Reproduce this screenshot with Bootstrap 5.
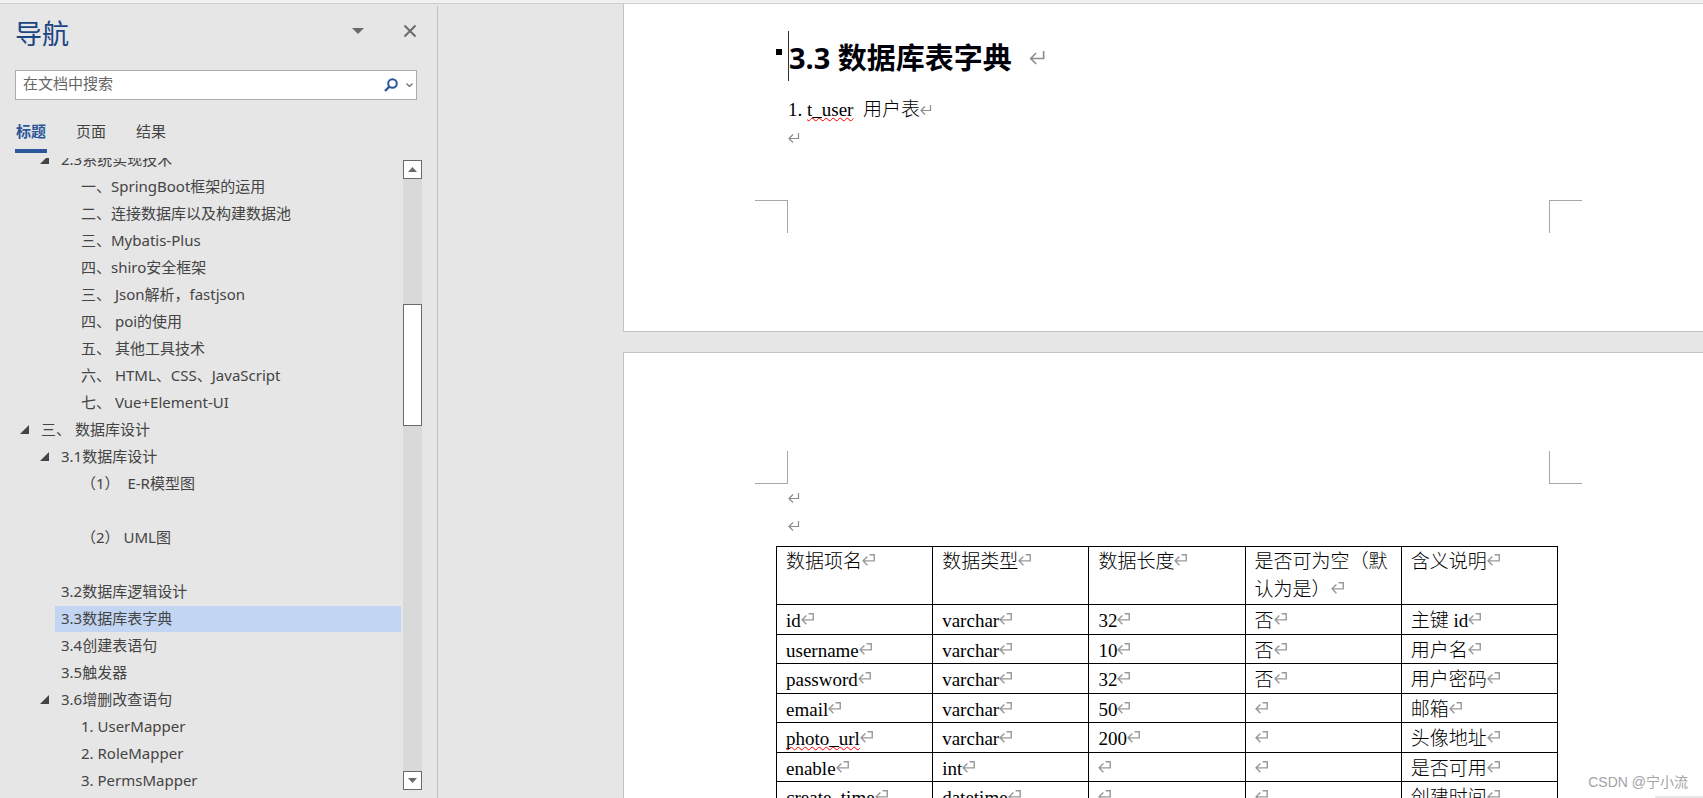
<!DOCTYPE html>
<html lang="zh-CN">
<head>
<meta charset="utf-8">
<meta name="viewport" content="width=device-width, initial-scale=1">
<title>3.3 数据库表字典</title>
<link href="https://cdn.jsdelivr.net/npm/bootstrap@5.3.0/dist/css/bootstrap.min.css" rel="stylesheet">
<style>
  body { background: #e6e6e6; color: #444; font: 15px/27px "Noto Sans", "Noto Sans CJK SC", sans-serif; }
  button { background: none; border: 0; padding: 0; color: inherit; }
  svg { display: block; }
  .ribbon-edge { height: 4px; background: #f1f1f1; border-bottom: 1px solid #cfcfcf; }

  /* navigation pane */
  .nav-pane { width: 438px; margin-top: 2px; border-right: 1px solid #c0c0c0; }
  .pane-head { height: 54px; padding: 0 20px 0 15px; }
  .pane-title { font-size: 27px; line-height: 54px; padding-top: 2px; font-weight: 400; color: #1a4585; }
  .pane-tools { gap: 39px; color: #6a6a6a; padding-bottom: 4px; }
  .search-box { height: 30px; margin: 10px 20px 0 15px; background: #fff; border: 1px solid #ababab; }
  .search-box input { font-size: 15px; line-height: 24px; color: #444; padding: 0 7px 4px; border: 0; border-radius: 0; background: none; }
  .search-box input::placeholder { color: #666; opacity: 1; }
  .search-box svg { margin-right: 8px; }
  .search-box button:last-child svg { margin-right: 3px; }
  .pane-tabs { margin: 16px 15px 0; gap: 28px; }
  .pane-tabs button { height: 37px; padding: 0 1px 2px; line-height: 27px; border-bottom: 4px solid transparent; }
  .pane-tabs .active { color: #2b579a; font-weight: 700; border-color: #2b579a; }
  .outline-area { margin: 5px 15px 0 0; }
  .outline { margin-top: -11px; }
  .outline li { height: 27px; padding-left: 75px; }
  .outline .lv1 { padding-left: 20px; }
  .outline .lv2 { padding-left: 55px; }
  .outline .lv2.open { padding-left: 40px; }
  .outline li > button { width: 9px; margin: 8px 6px 0 0; height: 9px; }
  .outline a { color: #444; padding-left: 6px; height: 26px; line-height: 24px; text-decoration: none; white-space: pre; }
  .outline .current a { background: #c2d5f2; }
  .scroll-col { width: 19px; margin: 2px 0 8px 2px; background: #d9d9d9; color: #6a6a6a; }
  .scroll-col button, .scroll-thumb { border: 1px solid #6a6a6a; background: #fff; }
  .scroll-col button { height: 19px; }
  .scroll-gap { flex: 125 1 0; }
  .scroll-thumb { flex: 121 1 0; }
  .scroll-rest { flex: 346 1 0; }

  /* document */
  .doc-area { padding-left: 185px; gap: 20px; }
  .sheet { background: #fff; border: 1px solid #c3c3c3; border-width: 0 0 0 1px; padding: 27px 154px 98px 164px; color: #000; font: 19px/28px "Liberation Serif", "Noto Sans CJK SC", serif; }
  .sheet-one { border-bottom-width: 1px; }
  .sheet-two { border-top-width: 1px; padding-top: 98px; padding-bottom: 0; }
  .sheet p { height: 28px; margin: 0; }
  .doc-heading { height: 50px; border-left: 1px solid #333; font: 700 29px/50px "Noto Sans", "Noto Sans CJK SC", sans-serif; margin-bottom: 15px; padding-top: 4px; color: #000008; }
  .doc-heading::before { content: ""; position: absolute; width: 6px; height: 6px; left: -13px; top: 18px; background: #000; }
  .doc-heading svg { margin-left: 17px; }
  .cjk, .dict td.cjk { font-weight: 300; }
  .misspelt { text-decoration: underline wavy #f00 1px; text-underline-offset: 1px; text-decoration-skip-ink: none; }
  .crops { margin: 0 -33px; }
  .crops span { width: 33px; height: 33px; border: 0 solid #a8a8a8; }
  .crop-tl { border-width: 1px 1px 0 0 !important; }
  .crop-tr { border-width: 1px 0 0 1px !important; }
  .crop-bl { border-width: 0 1px 1px 0 !important; }
  .crop-br { border-width: 0 0 1px 1px !important; }
  .mark-p { width: 12px; height: 11px; display: inline-block; color: #8c8c8c; vertical-align: 0; }
  .sheet-one .crops { margin-top: 48px; }
  .dict { width: calc(100% + 21px); margin: 6px -9px 0 -12px; table-layout: fixed; border-collapse: collapse; line-height: 24px; }
  .dict th, .dict td { border: 1px solid #000; padding: 4px 0 0 9px; vertical-align: top; font-weight: 400; white-space: nowrap; height: 29px; }
  .dict tbody tr:nth-child(odd) td { height: 30px; }
  .dict th { white-space: normal; font-weight: 300; padding-top: 1px; line-height: 28px; }
  .dict .mark-p { width: 13px; height: 12px; vertical-align: 2px; color: #999; }
  .watermark { right: 15px; bottom: 4px; font: 14px/24px "Liberation Sans", "Noto Sans CJK SC", sans-serif; color: #a3a3a3; }
  .corner-tab { right: 0; bottom: 0; width: 48px; height: 2px; background: #e6e6e6; }
</style>
</head>
<body>
<svg width="0" height="0" class="position-absolute" aria-hidden="true">
  <symbol id="ret" viewBox="0 0 12 11"><path d="M10.500 0V5.500H1M5 1.500L1 5.500L5 9.500" fill="none" stroke="currentColor" stroke-width="1.200"/></symbol>
  <symbol id="cel" viewBox="0 0 12 11"><path d="M7 .7H11.300V6.300H1M5 2.300L1 6.300L5 10.300" fill="none" stroke="currentColor" stroke-width="1.300"/></symbol>
  <symbol id="tri" viewBox="0 0 9 9"><path d="M9 0V9H0Z" fill="#444"/></symbol>
</svg>
<div class="vh-100 d-flex flex-column overflow-hidden position-relative">
  <div class="ribbon-edge flex-shrink-0"></div>
  <div class="d-flex flex-grow-1 overflow-hidden">
    <aside class="nav-pane d-flex flex-column flex-shrink-0">
      <div class="pane-head d-flex justify-content-between align-items-center flex-shrink-0">
        <h1 class="pane-title m-0">导航</h1>
        <div class="pane-tools d-flex align-items-center">
          <button type="button" aria-label="选项"><svg width="12" height="6"><path d="M0 0H12L6 6Z" fill="currentColor"/></svg></button>
          <button type="button" aria-label="关闭"><svg width="14" height="14"><path d="M1.500 1.500L12.500 12.500M12.500 1.500L1.500 12.500" stroke="currentColor" stroke-width="2"/></svg></button>
        </div>
      </div>
      <form class="search-box d-flex align-items-center flex-shrink-0">
        <input class="form-control shadow-none h-100" type="text" placeholder="在文档中搜索" aria-label="在文档中搜索">
        <button type="button" aria-label="搜索"><svg width="14" height="14"><circle cx="8.500" cy="5.500" r="4.300" fill="none" stroke="#2b579a" stroke-width="2"/><path d="M5.500 8.500L1 13" stroke="#2b579a" stroke-width="2.400"/></svg></button>
        <button type="button" aria-label="搜索选项"><svg width="7" height="5"><path d="M.5 .5L3.500 3.500L6.500 .5" fill="none" stroke="#666" stroke-width="1.200"/></svg></button>
      </form>
      <div class="pane-tabs d-flex flex-shrink-0" role="tablist">
        <button type="button" role="tab" class="active" aria-selected="true">标题</button>
        <button type="button" role="tab" aria-selected="false">页面</button>
        <button type="button" role="tab" aria-selected="false">结果</button>
      </div>
      <div class="outline-area d-flex flex-grow-1 overflow-hidden">
        <nav class="flex-grow-1 overflow-hidden">
          <ul class="outline list-unstyled mb-0">
            <li class="lv2 open d-flex"><button type="button" aria-label="折叠"><svg width="9" height="9"><use href="#tri"/></svg></button><a class="flex-grow-1" href="#">2.3系统实现技术</a></li>
            <li class="d-flex"><a class="flex-grow-1" href="#">一、SpringBoot框架的运用</a></li>
            <li class="d-flex"><a class="flex-grow-1" href="#">二、连接数据库以及构建数据池</a></li>
            <li class="d-flex"><a class="flex-grow-1" href="#">三、Mybatis-Plus</a></li>
            <li class="d-flex"><a class="flex-grow-1" href="#">四、shiro安全框架</a></li>
            <li class="d-flex"><a class="flex-grow-1" href="#">三、 Json解析，fastjson</a></li>
            <li class="d-flex"><a class="flex-grow-1" href="#">四、 poi的使用</a></li>
            <li class="d-flex"><a class="flex-grow-1" href="#">五、 其他工具技术</a></li>
            <li class="d-flex"><a class="flex-grow-1" href="#">六、 HTML、CSS、JavaScript</a></li>
            <li class="d-flex"><a class="flex-grow-1" href="#">七、 Vue+Element-UI</a></li>
            <li class="lv1 d-flex"><button type="button" aria-label="折叠"><svg width="9" height="9"><use href="#tri"/></svg></button><a class="flex-grow-1" href="#">三、 数据库设计</a></li>
            <li class="lv2 open d-flex"><button type="button" aria-label="折叠"><svg width="9" height="9"><use href="#tri"/></svg></button><a class="flex-grow-1" href="#">3.1数据库设计</a></li>
            <li class="d-flex"><a class="flex-grow-1" href="#">（1）  E-R模型图</a></li>
            <li></li>
            <li class="d-flex"><a class="flex-grow-1" href="#">（2） UML图</a></li>
            <li></li>
            <li class="lv2 d-flex"><a class="flex-grow-1" href="#">3.2数据库逻辑设计</a></li>
            <li class="lv2 current d-flex"><a class="flex-grow-1" href="#" aria-current="true">3.3数据库表字典</a></li>
            <li class="lv2 d-flex"><a class="flex-grow-1" href="#">3.4创建表语句</a></li>
            <li class="lv2 d-flex"><a class="flex-grow-1" href="#">3.5触发器</a></li>
            <li class="lv2 open d-flex"><button type="button" aria-label="折叠"><svg width="9" height="9"><use href="#tri"/></svg></button><a class="flex-grow-1" href="#">3.6增删改查语句</a></li>
            <li class="d-flex"><a class="flex-grow-1" href="#">1. UserMapper</a></li>
            <li class="d-flex"><a class="flex-grow-1" href="#">2. RoleMapper</a></li>
            <li class="d-flex"><a class="flex-grow-1" href="#">3. PermsMapper</a></li>
          </ul>
        </nav>
        <div class="scroll-col d-flex flex-column flex-shrink-0">
          <button type="button" class="d-flex align-items-center justify-content-center" aria-label="向上滚动"><svg width="9" height="5"><path d="M0 5H9L4.500 0Z" fill="currentColor"/></svg></button>
          <div class="scroll-gap"></div>
          <div class="scroll-thumb"></div>
          <div class="scroll-rest"></div>
          <button type="button" class="d-flex align-items-center justify-content-center" aria-label="向下滚动"><svg width="9" height="5"><path d="M0 0H9L4.500 5Z" fill="currentColor"/></svg></button>
        </div>
      </div>
    </aside>

    <main class="doc-area d-flex flex-column flex-grow-1 overflow-hidden">
      <section class="sheet sheet-one flex-shrink-0">
        <h2 class="doc-heading d-flex align-items-center position-relative">3.3 数据库表字典<svg width="17" height="15" color="#8c8c8c"><use href="#ret"/></svg></h2>
        <p>1. <span class="misspelt">t_user</span>&nbsp; <span class="cjk">用户表</span><svg class="mark-p"><use href="#ret"/></svg></p>
        <p><svg class="mark-p"><use href="#ret"/></svg></p>
        <div class="crops d-flex justify-content-between"><span class="crop-tl"></span><span class="crop-tr"></span></div>
      </section>
      <section class="sheet sheet-two flex-grow-1 overflow-hidden">
        <div class="crops d-flex justify-content-between"><span class="crop-bl"></span><span class="crop-br"></span></div>
        <p><svg class="mark-p"><use href="#ret"/></svg></p>
        <p><svg class="mark-p"><use href="#ret"/></svg></p>
        <table class="dict">
          <thead>
            <tr><th>数据项名<svg class="mark-p"><use href="#cel"/></svg></th><th>数据类型<svg class="mark-p"><use href="#cel"/></svg></th><th>数据长度<svg class="mark-p"><use href="#cel"/></svg></th><th>是否可为空（默认为是）<svg class="mark-p"><use href="#cel"/></svg></th><th>含义说明<svg class="mark-p"><use href="#cel"/></svg></th></tr>
          </thead>
          <tbody>
            <tr><td>id<svg class="mark-p"><use href="#cel"/></svg></td><td>varchar<svg class="mark-p"><use href="#cel"/></svg></td><td>32<svg class="mark-p"><use href="#cel"/></svg></td><td class="cjk">否<svg class="mark-p"><use href="#cel"/></svg></td><td class="cjk">主键 id<svg class="mark-p"><use href="#cel"/></svg></td></tr>
            <tr><td>username<svg class="mark-p"><use href="#cel"/></svg></td><td>varchar<svg class="mark-p"><use href="#cel"/></svg></td><td>10<svg class="mark-p"><use href="#cel"/></svg></td><td class="cjk">否<svg class="mark-p"><use href="#cel"/></svg></td><td class="cjk">用户名<svg class="mark-p"><use href="#cel"/></svg></td></tr>
            <tr><td>password<svg class="mark-p"><use href="#cel"/></svg></td><td>varchar<svg class="mark-p"><use href="#cel"/></svg></td><td>32<svg class="mark-p"><use href="#cel"/></svg></td><td class="cjk">否<svg class="mark-p"><use href="#cel"/></svg></td><td class="cjk">用户密码<svg class="mark-p"><use href="#cel"/></svg></td></tr>
            <tr><td>email<svg class="mark-p"><use href="#cel"/></svg></td><td>varchar<svg class="mark-p"><use href="#cel"/></svg></td><td>50<svg class="mark-p"><use href="#cel"/></svg></td><td><svg class="mark-p"><use href="#cel"/></svg></td><td class="cjk">邮箱<svg class="mark-p"><use href="#cel"/></svg></td></tr>
            <tr><td><span class="misspelt">photo_url</span><svg class="mark-p"><use href="#cel"/></svg></td><td>varchar<svg class="mark-p"><use href="#cel"/></svg></td><td>200<svg class="mark-p"><use href="#cel"/></svg></td><td><svg class="mark-p"><use href="#cel"/></svg></td><td class="cjk">头像地址<svg class="mark-p"><use href="#cel"/></svg></td></tr>
            <tr><td>enable<svg class="mark-p"><use href="#cel"/></svg></td><td>int<svg class="mark-p"><use href="#cel"/></svg></td><td><svg class="mark-p"><use href="#cel"/></svg></td><td><svg class="mark-p"><use href="#cel"/></svg></td><td class="cjk">是否可用<svg class="mark-p"><use href="#cel"/></svg></td></tr>
            <tr><td>create_time<svg class="mark-p"><use href="#cel"/></svg></td><td>datetime<svg class="mark-p"><use href="#cel"/></svg></td><td><svg class="mark-p"><use href="#cel"/></svg></td><td><svg class="mark-p"><use href="#cel"/></svg></td><td class="cjk">创建时间<svg class="mark-p"><use href="#cel"/></svg></td></tr>
          </tbody>
        </table>
      </section>
    </main>
  </div>
  <div class="watermark position-absolute">CSDN @宁小流</div>
  <div class="corner-tab position-absolute"></div>
</div>
<script src="https://cdn.jsdelivr.net/npm/bootstrap@5.3.0/dist/js/bootstrap.bundle.min.js"></script>
</body>
</html>
